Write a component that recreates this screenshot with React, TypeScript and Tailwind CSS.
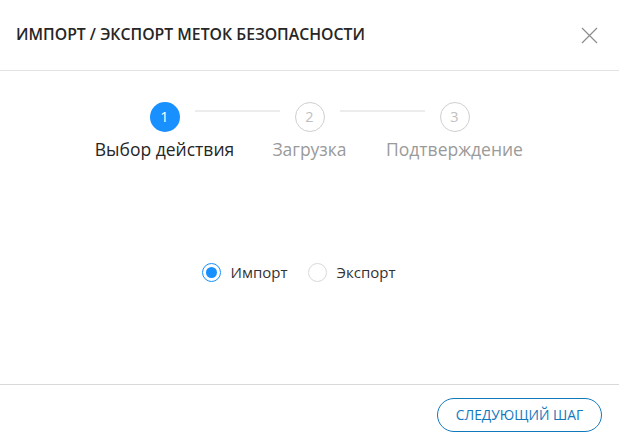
import { useState } from "react";

const steps = ["Выбор действия", "Загрузка", "Подтверждение"];

function classNames(...classes: (string | false | undefined)[]) {
  return classes.filter(Boolean).join(" ");
}

export default function App() {
  const [mode, setMode] = useState("import");

  return (
    <div
      className="w-[619px] h-[445px] bg-white flex flex-col text-[#333]"
      style={{ fontFamily: '"Open Sans", "Noto Sans", sans-serif' }}
    >
      <div className="h-[71px] shrink-0 flex items-center justify-between pl-4 pr-[21px] border-b border-[#e3e3e3]">
        <span className="text-[15.8px] font-semibold text-[#262626]">
          ИМПОРТ / ЭКСПОРТ МЕТОК БЕЗОПАСНОСТИ
        </span>
        <button className="w-[18px] h-[18px] flex items-center justify-center text-[#8c8c8c]">
          <svg width="17" height="17" viewBox="0 0 17 17" fill="none" stroke="currentColor" strokeWidth="1.2">
            <path d="M1 1 L16 16 M16 1 L1 16" />
          </svg>
        </button>
      </div>

      <div className="flex-1 flex flex-col items-center border-b border-[#d9d9d9]">
        <div className="w-[435px] mt-[31px] flex flex-col">
          <div className="flex items-start justify-center gap-[15px]">
            {steps.map((label, i) => (
              <div key={label} className="flex items-start gap-[15px]">
                {i > 0 && <div className="w-[85px] h-[2px] bg-[#ececec] mt-[8px]" />}
                <div
                  className={classNames(
                    "w-[30px] h-[30px] rounded-full flex items-center justify-center text-[14.5px]",
                    i === 0
                      ? "bg-[#1890ff] text-white"
                      : "border border-[#cfcfcf] text-[#bfbfbf]"
                  )}
                >
                  {i + 1}
                </div>
              </div>
            ))}
          </div>
          <div className="grid grid-cols-3 mt-[4px]">
            {steps.map((label, i) => (
              <span
                key={label}
                className={classNames(
                  "text-center text-[17.5px] whitespace-nowrap",
                  i === 0 ? "text-[#262626]" : "text-[#9a9a9a]"
                )}
              >
                {label}
              </span>
            ))}
          </div>
        </div>

        <div className="flex items-center gap-[20px] mt-[99px] mr-[22px] text-[15px] text-[#333]">
          {[
            ["import", "Импорт"],
            ["export", "Экспорт"],
          ].map(([value, text]) => (
            <label key={value} className="flex items-center gap-[10px] cursor-pointer">
              <span
                className={classNames(
                  "w-[19px] h-[19px] rounded-full border flex items-center justify-center",
                  mode === value ? "border-[#1890ff]" : "border-[#d9d9d9]"
                )}
                onClick={() => setMode(value)}
              >
                {mode === value && <span className="w-[11px] h-[11px] rounded-full bg-[#1890ff]" />}
              </span>
              <span>{text}</span>
            </label>
          ))}
        </div>
      </div>

      <div className="h-[60px] shrink-0 flex items-start justify-end pr-[17px] pt-[13px]">
        <button className="h-[34px] w-[165px] rounded-full border border-[#1379bd] text-[#1379bd] text-[13.8px] flex items-center justify-center">
          СЛЕДУЮЩИЙ ШАГ
        </button>
      </div>
    </div>
  );
}
